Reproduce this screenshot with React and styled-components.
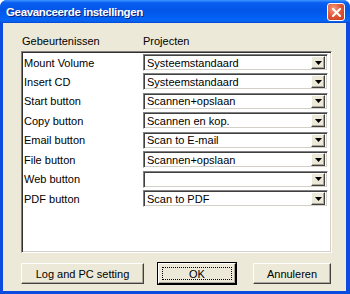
import React from 'react';
import styled, { createGlobalStyle } from 'styled-components';

const GlobalStyle = createGlobalStyle`
  html, body {
    margin: 0;
    padding: 0;
    width: 350px;
    height: 294px;
    overflow: hidden;
    background: #ffffff;
  }
`;

const Window = styled.div`
  width: 350px;
  height: 294px;
  box-sizing: border-box;
  display: flex;
  flex-direction: column;
  background: #0b4be0;
  border-radius: 7px 7px 0 0;
  padding: 0 4px 3px 3px;
  font-family: "Liberation Sans", Arial, sans-serif;
  font-size: 11px;
  color: #000000;
`;

const TitleBar = styled.div`
  height: 23px;
  margin: 0 -4px 0 -3px;
  padding: 0 5px 0 6px;
  display: flex;
  align-items: center;
  justify-content: space-between;
  border-radius: 7px 7px 0 0;
  background: linear-gradient(
    to bottom,
    #3d95ff 0%,
    #0a5ff0 12%,
    #0255e6 45%,
    #0265f7 85%,
    #0a5fe8 94%,
    #0043d4 100%
  );
`;

const Title = styled.span`
  color: #ffffff;
  font-weight: bold;
  font-size: 11.5px;
  letter-spacing: -0.35px;
  text-shadow: 1px 1px 0 #0a1f80;
`;

const CloseButton = styled.div`
  width: 18px;
  height: 18px;
  margin-top: 1px;
  box-sizing: border-box;
  border: 1px solid #ffffff;
  border-radius: 3px;
  background: radial-gradient(circle at 35% 30%, #f4a184 0%, #e2593b 45%, #c93a1c 100%);
  display: flex;
  align-items: center;
  justify-content: center;
`;

const Body = styled.div`
  flex: 1;
  background: #ece9d8;
  display: flex;
  flex-direction: column;
  padding: 9px 14px 0 18px;
`;

const HeaderRow = styled.div`
  display: flex;
  height: 17px;
  align-items: center;
  margin-bottom: 2px;
`;

const HeaderCell = styled.div`
  width: ${p => p.width}px;
  padding-left: ${p => p.indent || 0}px;
`;

const ListBox = styled.div`
  height: 202px;
  box-sizing: border-box;
  background: #ffffff;
  border-top: 1px solid #808080;
  border-left: 1px solid #808080;
  border-right: 1px solid #ffffff;
  border-bottom: 1px solid #ffffff;
  box-shadow: inset 1px 1px 0 #303030, inset -1px -1px 0 #d4d0c8;
  padding: 2px 3px 0 2px;
  display: grid;
  grid-template-columns: 119px 1fr;
  grid-auto-rows: 17px;
  row-gap: 2.45px;
  align-items: center;
`;

const Label = styled.div`
  white-space: nowrap;
`;

const Combo = styled.div`
  height: 17px;
  box-sizing: border-box;
  display: flex;
  align-items: center;
  background: #ffffff;
  border-top: 1px solid #808080;
  border-left: 1px solid #808080;
  border-right: 1px solid #ffffff;
  border-bottom: 1px solid #ffffff;
  box-shadow: inset 1px 1px 0 #404040, inset -1px -1px 0 #d4d0c8;
  padding: 0 2px 0 3px;
`;

const ComboText = styled.span`
  flex: 1;
  white-space: nowrap;
  overflow: hidden;
`;

const DropButton = styled.div`
  width: 14px;
  height: 13px;
  box-sizing: border-box;
  background: #ece9d8;
  border-top: 1px solid #ffffff;
  border-left: 1px solid #ffffff;
  border-right: 1px solid #404040;
  border-bottom: 1px solid #404040;
  box-shadow: inset -1px -1px 0 #aca899;
  display: flex;
  align-items: center;
  justify-content: center;
`;

const ButtonRow = styled.div`
  display: flex;
  margin-top: 10px;
`;

const Button = styled.div`
  width: ${p => p.width}px;
  margin-left: ${p => p.offset || 0}px;
  height: 21px;
  box-sizing: border-box;
  background: #ece9d8;
  border-top: 1px solid #ffffff;
  border-left: 1px solid #ffffff;
  border-right: 1px solid ${p => (p.primary ? '#000000' : '#404040')};
  border-bottom: 1px solid ${p => (p.primary ? '#000000' : '#404040')};
  box-shadow: inset -1px -1px 0 #aca899;
  outline: ${p => (p.primary ? '1px solid #000000' : 'none')};
  display: flex;
  align-items: center;
  justify-content: center;
  position: relative;
`;

const FocusRing = styled.span`
  position: absolute;
  inset: 3px;
  border: 1px dotted #000000;
`;

const Arrow = () => (
  <svg width="7" height="4" viewBox="0 0 7 4">
    <polygon points="0,0 7,0 3.5,4" fill="#000" />
  </svg>
);

const CloseIcon = () => (
  <svg width="9" height="9" viewBox="0 0 9 9">
    <path d="M1 1 L8 8 M8 1 L1 8" stroke="#fff" strokeWidth="2" strokeLinecap="square" />
  </svg>
);

const rows = [
  ['Mount Volume', 'Systeemstandaard'],
  ['Insert CD', 'Systeemstandaard'],
  ['Start button', 'Scannen+opslaan'],
  ['Copy button', 'Scannen en kop.'],
  ['Email button', 'Scan to E-mail'],
  ['File button', 'Scannen+opslaan'],
  ['Web button', ''],
  ['PDF button', 'Scan to PDF'],
];

export default function App() {
  return (
    <>
      <GlobalStyle />
      <Window>
        <TitleBar>
          <Title>Geavanceerde instellingen</Title>
          <CloseButton>
            <CloseIcon />
          </CloseButton>
        </TitleBar>
        <Body>
          <HeaderRow>
            <HeaderCell width={121} indent={1}>Gebeurtenissen</HeaderCell>
            <HeaderCell width={150}>Projecten</HeaderCell>
          </HeaderRow>
          <ListBox>
            {rows.map(([label, value]) => (
              <React.Fragment key={label}>
                <Label>{label}</Label>
                <Combo>
                  <ComboText>{value}</ComboText>
                  <DropButton>
                    <Arrow />
                  </DropButton>
                </Combo>
              </React.Fragment>
            ))}
          </ListBox>
          <ButtonRow>
            <Button width={123}>Log and PC setting</Button>
            <Button width={78} offset={14} primary>
              <FocusRing />
              OK
            </Button>
            <Button width={78} offset={17}>Annuleren</Button>
          </ButtonRow>
        </Body>
      </Window>
    </>
  );
}
